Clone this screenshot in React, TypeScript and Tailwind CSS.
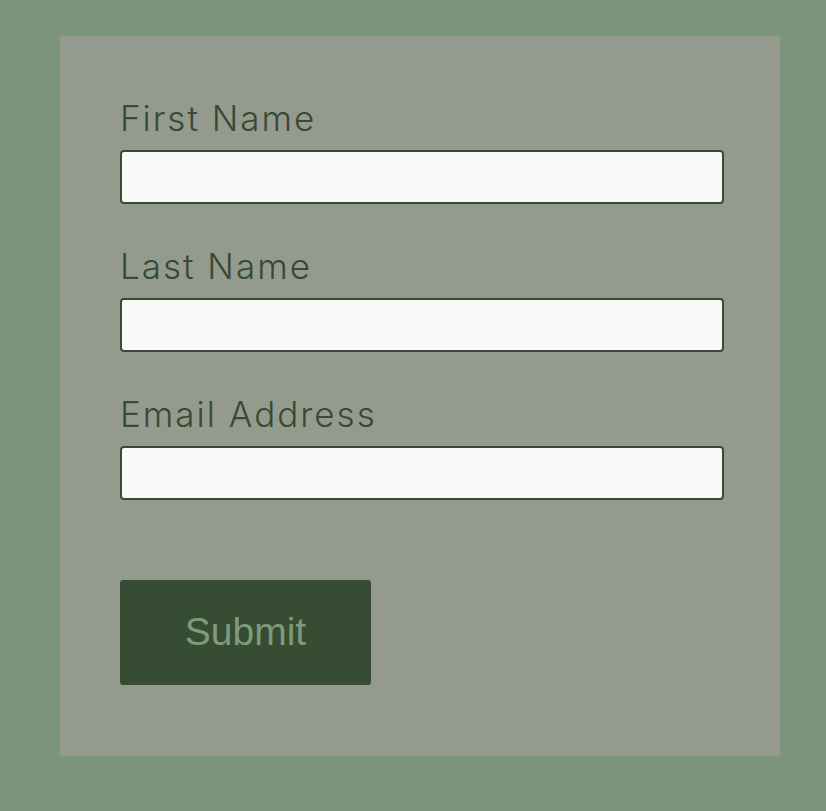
export default function App() {
  const fields = ['First Name', 'Last Name', 'Email Address'];
  return (
    <div className="min-h-[811px] w-full bg-[#7c9479] pt-[36px] pl-[60px]">
      <form
        className="w-[720px] h-[720px] bg-[#949a8e] p-[60px] flex flex-col"
        onSubmit={(e) => e.preventDefault()}
      >
        {fields.map((f) => (
          <div key={f} className="flex flex-col mb-[40px]">
            <label className="text-[35px] leading-[45px] mb-[9px] tracking-[2px] text-[#374a32] font-['Inter',sans-serif] font-light">
              {f}
            </label>
            <input
              type="text"
              className="w-[604px] h-[54px] bg-[#f9f9f9] border-2 border-[#374a32] rounded-[4px] px-3 outline-none"
            />
          </div>
        ))}
        <button
          type="submit"
          className="mt-[40px] w-[251px] h-[105px] bg-[#364d33] rounded-[3px] text-[#7e9a7a] text-[39px] font-['Liberation_Sans',Arial,sans-serif]"
        >
          Submit
        </button>
      </form>
    </div>
  );
}
